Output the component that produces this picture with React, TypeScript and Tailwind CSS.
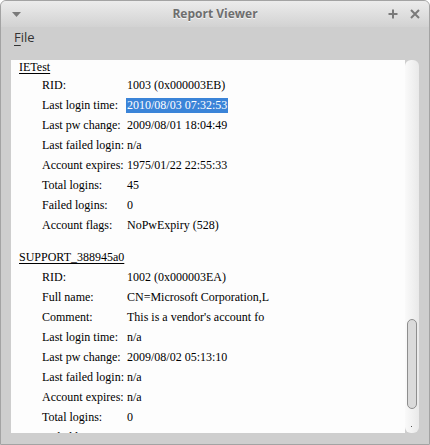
import React from 'react';

type Row = { label: string; value: string; selected?: boolean };

const accounts: { name: string; rows: Row[] }[] = [
  {
    name: 'IETest',
    rows: [
      { label: 'RID:', value: '1003 (0x000003EB)' },
      { label: 'Last login time:', value: '2010/08/03 07:32:53', selected: true },
      { label: 'Last pw change:', value: '2009/08/01 18:04:49' },
      { label: 'Last failed login:', value: 'n/a' },
      { label: 'Account expires:', value: '1975/01/22 22:55:33' },
      { label: 'Total logins:', value: '45' },
      { label: 'Failed logins:', value: '0' },
      { label: 'Account flags:', value: 'NoPwExpiry (528)' },
    ],
  },
  {
    name: 'SUPPORT_388945a0',
    rows: [
      { label: 'RID:', value: '1002 (0x000003EA)' },
      { label: 'Full name:', value: 'CN=Microsoft Corporation,L' },
      { label: 'Comment:', value: "This is a vendor's account fo" },
      { label: 'Last login time:', value: 'n/a' },
      { label: 'Last pw change:', value: '2009/08/02 05:13:10' },
      { label: 'Last failed login:', value: 'n/a' },
      { label: 'Account expires:', value: 'n/a' },
      { label: 'Total logins:', value: '0' },
      { label: 'Failed logins:', value: '0' },
    ],
  },
];

const App = () => {
  return (
    <div className="w-[430px] h-[445px] bg-[#cecece] border border-[#a3a3a3] rounded-t-[6px] flex flex-col overflow-hidden">
      {/* Title bar */}
      <div className="relative h-[26px] shrink-0 bg-gradient-to-b from-[#ececec] to-[#d2d2d2] flex items-center justify-center">
        <svg className="absolute left-[11px] top-[11px]" width="9" height="5" viewBox="0 0 9 5">
          <polygon points="0,0 9,0 4.5,5" fill="#7a7a7a" />
        </svg>
        <span
          className="text-[12px] font-bold text-[#6e6e6e] [text-shadow:0_1px_0_#f6f6f6]"
          style={{ fontFamily: '"Open Sans", "DejaVu Sans", sans-serif' }}
        >
          Report Viewer
        </span>
        <svg className="absolute left-[387px] top-[8px]" width="10" height="10" viewBox="0 0 10 10">
          <path d="M5 0.5v9M0.5 5h9" stroke="#7a7a7a" strokeWidth="2" />
        </svg>
        <svg className="absolute left-[409px] top-[8px]" width="10" height="10" viewBox="0 0 10 10">
          <path d="M1 1l8 8M9 1l-8 8" stroke="#7a7a7a" strokeWidth="2" />
        </svg>
      </div>

      {/* Menu bar */}
      <div className="h-[33px] shrink-0 flex items-center pl-[13px] pb-[11px]">
        <span
          className="text-[13px] text-[#333]"
          style={{ fontFamily: '"Open Sans", "DejaVu Sans", sans-serif' }}
        >
          <span className="underline underline-offset-[3px]">F</span>ile
        </span>
      </div>

      {/* Content */}
      <div className="flex h-[373px] shrink-0 pl-[10px] pr-[10px]">
        <div
          className="flex-1 bg-[#fdfdfd] overflow-hidden text-[12px] text-black"
          style={{ fontFamily: '"Liberation Serif", "Times New Roman", serif' }}
        >
          {accounts.map((acc, i) => (
            <div key={acc.name} className={i > 0 ? 'mt-[12px]' : ''}>
              <div className={`pl-[8px] ${i === 0 ? 'h-[15px] leading-[14px]' : 'h-[20px] leading-[20px]'}`}>
                <span className="underline underline-offset-[2px]">{acc.name}</span>
              </div>
              {acc.rows.map((r) => (
                <div key={r.label} className="flex h-[20px] leading-[20px] pl-[31px] whitespace-nowrap">
                  <span className="w-[85px] shrink-0">{r.label}</span>
                  {r.selected ? (
                    <span className="self-center inline-block bg-[#3b84d8] text-white leading-[15px] h-[15px] pl-[1px] pr-[1px] -ml-[1px]">
                      {r.value}
                    </span>
                  ) : (
                    <span>{r.value}</span>
                  )}
                </div>
              ))}
            </div>
          ))}
        </div>

        {/* Scrollbar */}
        <div className="relative w-[14px] shrink-0 rounded-[6px] bg-gradient-to-r from-[#fafafa] to-[#e9e9e9]">
          <div className="absolute left-[2px] top-[259px] w-[10px] h-[90px] rounded-full border border-[#8e8e8e] bg-[#dadada]" />
          <div className="absolute left-[6px] top-[366px] w-[1px] h-[1px] bg-[#555]" />
        </div>
      </div>
    </div>
  );
};

export default App;
